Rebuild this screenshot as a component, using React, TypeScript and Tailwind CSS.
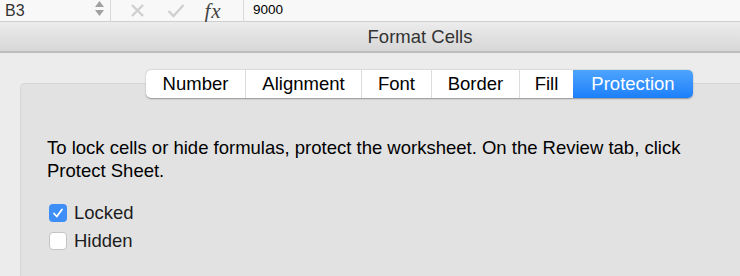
const tabs = ['Number', 'Alignment', 'Font', 'Border', 'Fill', 'Protection'];
const widths = ['w-[100px]', 'w-[116px]', 'w-[70px]', 'w-[88px]', 'w-[53px]', 'w-[120px]'];

function Check() {
  return (
    <svg width="12" height="12" viewBox="0 0 12 12">
      <path d="M2 6.5 L4.8 9.5 L10 2.5" fill="none" stroke="white" strokeWidth="1.8" strokeLinecap="round" strokeLinejoin="round" />
    </svg>
  );
}

export default function App() {
  return (
    <div className="w-[740px] h-[276px] overflow-hidden flex flex-col bg-[#ececec] text-[#1d1d1d] font-['Liberation_Sans',Arial,sans-serif]">
      {/* formula bar */}
      <div className="h-[22px] shrink-0 flex items-center bg-[#f8f8f8] border-b border-[#cfcfcf] text-[16px]">
        <div className="w-[88px] pl-[5px] text-[#333]">B3</div>
        <div className="w-[22px] flex flex-col items-center gap-[3px] -mt-[4px]">
          <svg width="9" height="6" viewBox="0 0 9 6"><path d="M4.5 0 L9 6 L0 6Z" fill="#a0a0a0" /></svg>
          <svg width="9" height="6" viewBox="0 0 9 6"><path d="M0 0 L9 0 L4.5 6Z" fill="#a0a0a0" /></svg>
        </div>
        <div className="w-px h-[22px] bg-[#d8d8d8]" />
        <div className="w-[50px] flex justify-center pl-[3px]">
          <svg width="15" height="15" viewBox="0 0 15 15"><path d="M2 2 L13 13 M13 2 L2 13" stroke="#cfcfcf" strokeWidth="2.4" /></svg>
        </div>
        <div className="w-[30px] flex justify-center">
          <svg width="18" height="15" viewBox="0 0 18 15"><path d="M1.5 8 L6.5 13 L16.5 2" fill="none" stroke="#cfcfcf" strokeWidth="2.4" /></svg>
        </div>
        <div className="w-[52px] pr-[6px] flex justify-center">
          <span className="text-[21px] leading-[20px] italic font-['Liberation_Serif',serif] text-[#444] tracking-[1px] pr-[2px]">fx</span>
        </div>
        <div className="w-px h-[22px] bg-[#d8d8d8]" />
        <div className="pl-[9px] text-[13.5px] text-black">9000</div>
      </div>

      {/* title bar */}
      <div className="h-[31px] shrink-0 flex items-center justify-center pl-[100px] bg-gradient-to-b from-[#ececec] to-[#d7d7d7] border-b-2 border-[#bdbdbd] text-[18.5px] text-[#333]">
        Format Cells
      </div>

      {/* body */}
      <div className="flex-1 pt-[30px] pl-[20px]">
        <div className="h-full bg-[#e2e2e2] border-l border-t border-[#d6d6d6] rounded-tl-[5px]">
          <div className="-mt-[14px] ml-[125px] flex h-[28px] w-fit rounded-[5px] bg-white shadow-[0_0.5px_1.5px_rgba(0,0,0,0.35)] text-[18.5px] text-black">
            {tabs.map((t, i) => (
              <div
                key={t}
                className={
                  i === 5
                    ? `${widths[i]} flex items-center justify-center rounded-r-[5px] bg-gradient-to-b from-[#4da4fd] to-[#1b7ffb] text-white`
                    : `${widths[i]} flex items-center justify-center ${i < 4 ? 'border-r border-[#dcdcdc]' : ''}`
                }
              >
                {t}
              </div>
            ))}
          </div>
          <div className="pl-[26px] pt-[38px] text-[18.5px] leading-[23px] text-black whitespace-nowrap">
            To lock cells or hide formulas, protect the worksheet. On the Review tab, click
            <br />
            Protect Sheet.
          </div>
          <div className="pl-[28px] pt-[22px] flex flex-col gap-[10px] text-[18.5px] text-[#1d1d1d]">
            <label className="flex items-center gap-[7px] h-[18px]">
              <span className="w-[18px] h-[18px] rounded-[4px] bg-[#3d8ef7] flex items-center justify-center">
                <Check />
              </span>
              Locked
            </label>
            <label className="flex items-center gap-[7px] h-[18px]">
              <span className="w-[18px] h-[18px] rounded-[4px] bg-white border border-[#c4c4c4]" />
              Hidden
            </label>
          </div>
        </div>
      </div>
    </div>
  );
}
